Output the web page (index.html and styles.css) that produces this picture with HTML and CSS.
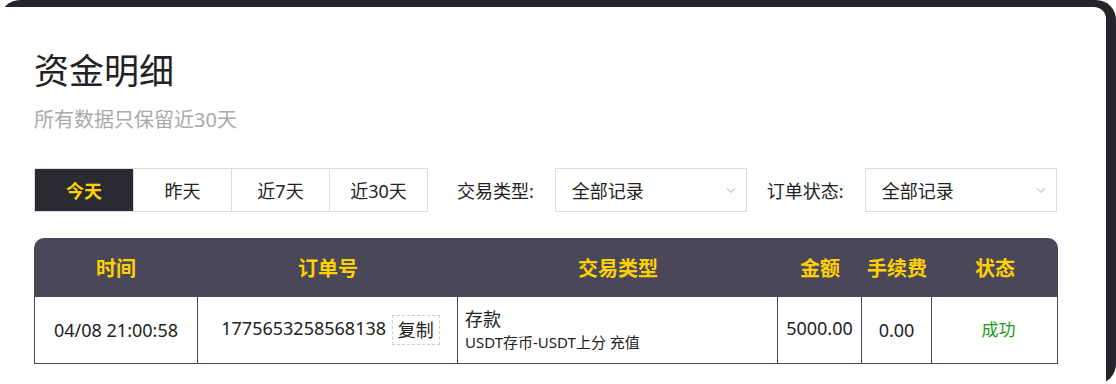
FILE: index.html
```html
<!DOCTYPE html>
<html lang="zh-CN">
<head>
  <meta charset="UTF-8" />
  <meta name="viewport" content="width=device-width, initial-scale=1.0"/>
  <title>资金明细</title>
  <link rel="stylesheet" href="styles.css">
</head>
<body>
  <div class="frame">
    <div class="panel">
      <h2 class="title">资金明细</h2>
      <p class="subtitle">所有数据只保留近30天</p>

      <div class="filters">
        <div class="tabs">
          <span class="tab active">今天</span>
          <span class="tab">昨天</span>
          <span class="tab">近7天</span>
          <span class="tab">近30天</span>
        </div>

        <label class="filter-label">交易类型:</label>
        <div class="select">
          <span>全部记录</span>
          <svg class="chevron" width="10" height="7" viewBox="0 0 10 7"><path d="M1 1.2 L5 5.2 L9 1.2" fill="none" stroke="#cfcfcf" stroke-width="1.6"/></svg>
        </div>

        <label class="filter-label">订单状态:</label>
        <div class="select">
          <span>全部记录</span>
          <svg class="chevron" width="10" height="7" viewBox="0 0 10 7"><path d="M1 1.2 L5 5.2 L9 1.2" fill="none" stroke="#cfcfcf" stroke-width="1.6"/></svg>
        </div>
      </div>

      <table class="records">
        <colgroup>
          <col style="width:164px">
          <col style="width:260px">
          <col style="width:320px">
          <col style="width:84px">
          <col style="width:70px">
          <col style="width:126px">
        </colgroup>
        <thead>
          <tr>
            <th>时间</th>
            <th>订单号</th>
            <th>交易类型</th>
            <th>金额</th>
            <th>手续费</th>
            <th>状态</th>
          </tr>
        </thead>
        <tbody>
          <tr>
            <td>04/08 21:00:58</td>
            <td class="order">1775653258568138 <span class="copy">复制</span></td>
            <td class="type">
              <div>存款</div>
              <div class="type-sub">USDT存币-USDT上分 充值</div>
            </td>
            <td class="amount">5000.00</td>
            <td>0.00</td>
            <td class="ok">成功</td>
          </tr>
        </tbody>
      </table>
    </div>
  </div>
</body>
</html>
```

FILE: styles.css
```css
html, body {
  margin: 0;
  padding: 0;
  background: #ffffff;
  overflow: hidden;
}
body {
  font-family: "Noto Sans", "Noto Sans CJK SC", sans-serif;
  color: #222;
}
.frame {
  height: 384px;
  background: #25242c;
  border-radius: 20px;
  padding: 7px 10px 0 0;
  box-sizing: border-box;
}
.panel {
  background: #fff;
  height: 100%;
  border-radius: 0 12px 0 0;
  padding: 44px 48px 0 34px;
  box-sizing: border-box;
}
.title {
  margin: 0;
  font-size: 35px;
  line-height: 40px;
  font-weight: 400;
  color: #222;
}
.subtitle {
  margin: 16px 0 0;
  font-size: 20px;
  line-height: 26px;
  color: #aaa;
}
.filters {
  display: flex;
  align-items: center;
  margin-top: 35px;
  height: 44px;
}
.tabs {
  display: flex;
  border: 1px solid #ddd;
  height: 44px;
  box-sizing: border-box;
}
.tab {
  width: 97px;
  display: flex;
  align-items: center;
  justify-content: center;
  font-size: 18px;
  color: #222;
  border-left: 1px solid #ddd;
}
.tab:first-child {
  border-left: none;
  width: 98px;
}
.tab.active {
  background: #2a2a33;
  color: #ffd000;
  font-weight: 700;
}
.filter-label {
  font-size: 18px;
  margin: 0 21px 0 29px;
  color: #222;
}
.select {
  width: 192px;
  height: 44px;
  box-sizing: border-box;
  border: 1px solid #ddd;
  display: flex;
  align-items: center;
  justify-content: space-between;
  padding: 0 10px 0 16px;
  font-size: 18px;
}
.filter-label + .select + .filter-label {
  margin-left: 20px;
}
.records {
  margin-top: 26px;
  width: 1024px;
  border-collapse: separate;
  border-spacing: 0;
  table-layout: fixed;
}
.records th {
  background: #4a4858;
  color: #ffd000;
  font-size: 20px;
  font-weight: 700;
  height: 59px;
  padding: 0;
}
.records th:first-child {
  border-top-left-radius: 10px;
}
.records th:last-child {
  border-top-right-radius: 10px;
}
.records td {
  height: 67px;
  box-sizing: border-box;
  text-align: center;
  font-size: 18px;
  line-height: 24px;
  border-right: 1px solid #4a4858;
  border-bottom: 1px solid #4a4858;
  padding: 0;
}
.records td:first-child {
  border-left: 1px solid #4a4858;
}
.records td.order {
  padding-left: 6px;
}
.copy {
  display: inline-block;
  border: 1px dashed #ccc;
  padding: 2px 5px;
  margin-left: 1px;
  line-height: 24px;
  vertical-align: middle;
}
.records td.type {
  text-align: left;
  padding: 0 7px;
}
.type-sub {
  font-size: 15px;
  line-height: 22px;
}
.records td.amount {
  padding-bottom: 4px;
}
.records td.ok {
  color: #1a9a1a;
  font-size: 17px;
  padding-left: 8px;
}
```
